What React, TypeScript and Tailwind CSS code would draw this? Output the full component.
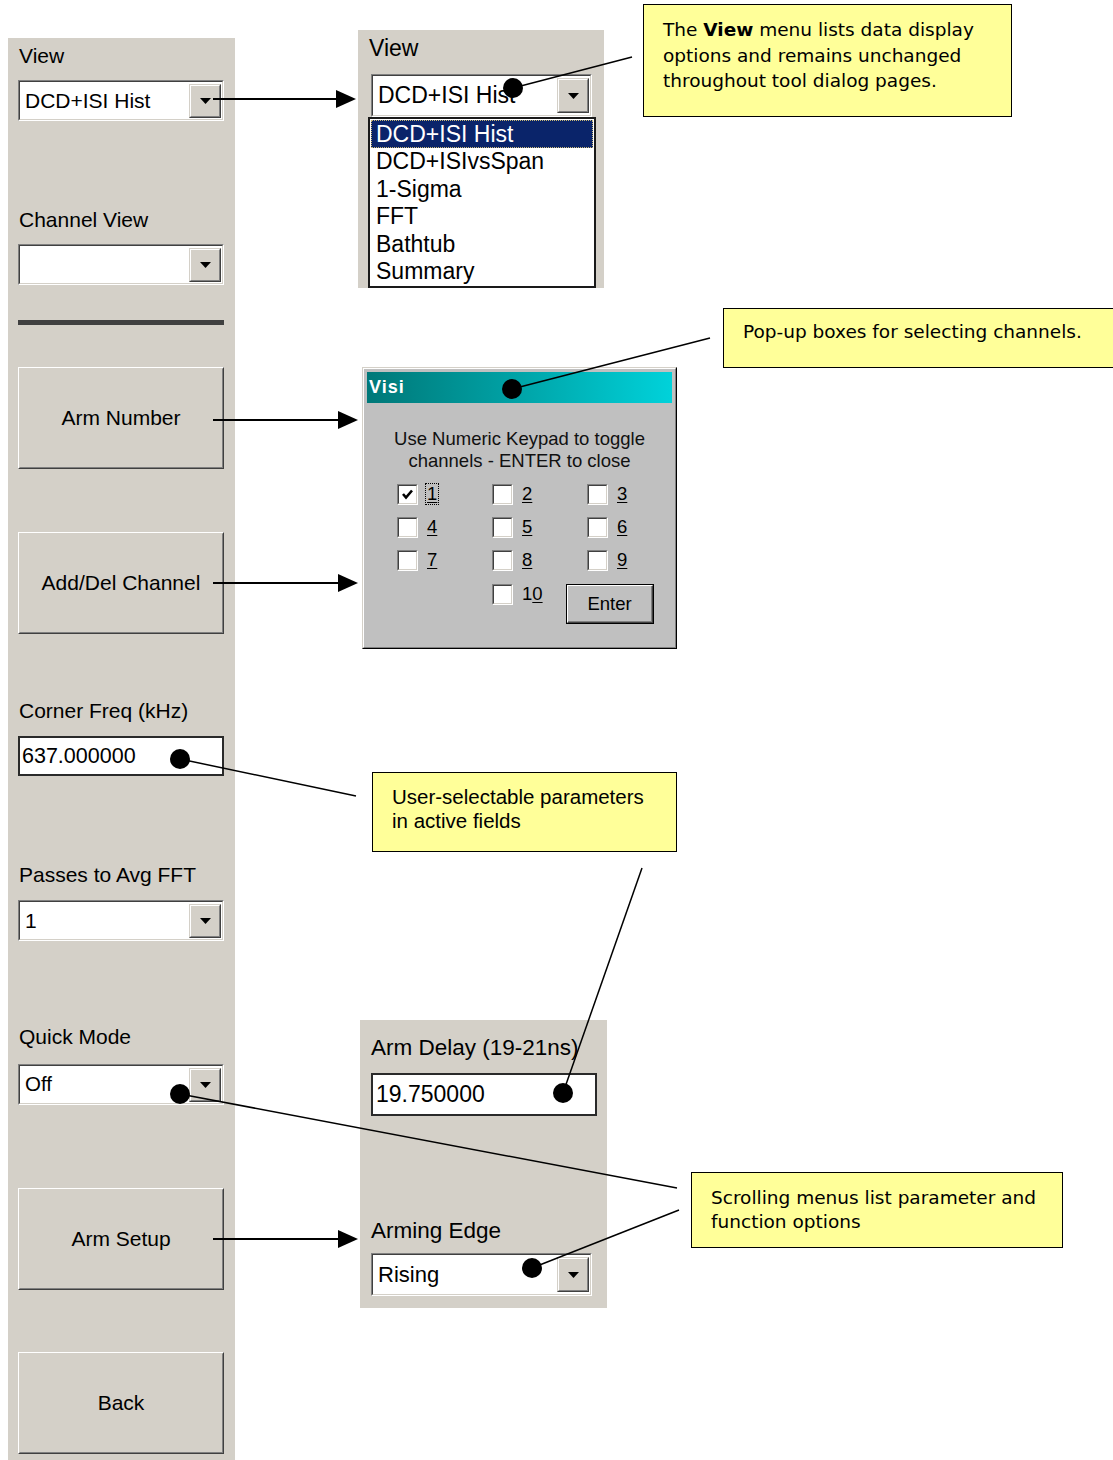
import React from 'react';

const ui = "font-['Liberation_Sans',Arial,sans-serif]";
const tah = "font-['DejaVu_Sans',Verdana,sans-serif]";

function Tri() {
  return (
    <svg width="11" height="6" viewBox="0 0 11 6">
      <polygon points="0,0 11,0 5.5,6" fill="black" />
    </svg>
  );
}

function DropBtn({ className }: { className: string }) {
  return (
    <div className={`border border-t-[#d4d0c8] border-l-[#d4d0c8] border-b-[#404040] border-r-[#404040] bg-[#d4d0c8] ${className}`}>
      <div className="h-full w-full border border-t-white border-l-white border-b-[#808080] border-r-[#808080] flex items-center justify-center">
        <Tri />
      </div>
    </div>
  );
}

function Select({ value, className, textClass, btnClass }: { value: string; className: string; textClass: string; btnClass: string }) {
  return (
    <div className={`border border-t-[#808080] border-l-[#808080] border-b-white border-r-white ${className}`}>
      <div className="h-full border border-t-[#404040] border-l-[#404040] border-b-[#d4d0c8] border-r-[#d4d0c8] bg-white flex items-center justify-between pl-[5px] pr-[1px]">
        <span className={`${textClass} whitespace-nowrap`}>{value}</span>
        <DropBtn className={btnClass} />
      </div>
    </div>
  );
}

function Label({ text, className }: { text: string; className: string }) {
  return <div className={`text-[21px] leading-[24px] text-black whitespace-nowrap ${className}`}>{text}</div>;
}

function BigButton({ label, className }: { label: string; className: string }) {
  return (
    <div className={`h-[102px] border border-t-white border-l-white border-b-[#404040] border-r-[#404040] ${className}`}>
      <div className="h-full border border-t-[#d4d0c8] border-l-[#d4d0c8] border-b-[#808080] border-r-[#808080] flex items-center justify-center text-[21px] text-black">
        {label}
      </div>
    </div>
  );
}

function Check({ checked }: { checked?: boolean }) {
  return (
    <div className="w-[21px] h-[21px] shrink-0 border border-t-[#808080] border-l-[#808080] border-b-white border-r-white">
      <div className="h-full border border-t-[#404040] border-l-[#404040] border-b-[#d4d0c8] border-r-[#d4d0c8] bg-white flex items-center justify-center">
        {checked && (
          <svg width="13" height="13" viewBox="0 0 13 13">
            <path d="M2 6 L5 9.5 L11 2.5" stroke="black" strokeWidth="2.6" fill="none" />
          </svg>
        )}
      </div>
    </div>
  );
}

function Chan({ pre, u, focus }: { pre?: string; u: string; focus?: boolean }) {
  return (
    <div className="flex items-start gap-[7px]">
      <Check checked={focus} />
      <span
        className={`text-[18.5px] leading-[20px] px-[1px] -mt-[1px] border border-dotted ${focus ? 'border-black' : 'border-transparent'}`}
      >
        {pre}
        <span className="underline underline-offset-2">{u}</span>
      </span>
    </div>
  );
}

export default function App() {
  const listItems = ['DCD+ISI Hist', 'DCD+ISIvsSpan', '1-Sigma', 'FFT', 'Bathtub', 'Summary'];

  return (
    <div className={`relative w-[1113px] h-[1460px] bg-white overflow-hidden text-black ${ui}`}>
      <div className="flex h-full">
        {/* left control column */}
        <aside className="ml-[8px] mt-[38px] w-[227px] bg-[#d4d0c8] flex flex-col pl-[10px] pr-[11px]">
          <Label text="View" className="mt-[6px] pl-[1px]" />
          <Select value="DCD+ISI Hist" className="mt-[12px] h-[41px]" textClass="text-[21px]" btnClass="w-[32px] h-[34px]" />
          <Label text="Channel View" className="mt-[87px] pl-[1px]" />
          <Select value="" className="mt-[12px] h-[41px]" textClass="text-[21px]" btnClass="w-[32px] h-[34px]" />
          <div className="mt-[35px] h-[5px] bg-[#404040]" />
          <BigButton label="Arm Number" className="mt-[42px]" />
          <BigButton label="Add/Del Channel" className="mt-[63px]" />
          <Label text="Corner Freq (kHz)" className="mt-[65px] pl-[1px]" />
          <div className="mt-[13px] h-[40px] border-2 border-[#2a2a2a] bg-white flex items-center pl-[2px] text-[21.5px]">
            637.000000
          </div>
          <Label text="Passes to Avg FFT" className="mt-[87px] pl-[1px]" />
          <Select value="1" className="mt-[13px] h-[41px]" textClass="text-[21px]" btnClass="w-[32px] h-[34px]" />
          <Label text="Quick Mode" className="mt-[84px] pl-[1px]" />
          <Select value="Off" className="mt-[15px] h-[41px]" textClass="text-[20.5px]" btnClass="w-[32px] h-[34px]" />
          <BigButton label="Arm Setup" className="mt-[83px]" />
          <BigButton label="Back" className="mt-[62px]" />
        </aside>
      </div>

      {/* View menu opened */}
      <div className="absolute left-[358px] top-[30px] w-[246px] h-[258px] bg-[#d4d0c8] overflow-hidden pt-[5px]">
        <div className="pl-[11px] text-[23px] leading-[26px]">View</div>
        <Select value="DCD+ISI Hist" className="ml-[13px] mt-[13px] w-[221px] h-[43px]" textClass="text-[23px]" btnClass="w-[32px] h-[35px]" />
        <div className="ml-[10px] w-[228px] border-2 border-[#1a1a1a] bg-white p-[1px]">
          {listItems.map((it, i) => (
            <div
              key={it}
              className={`h-[27.5px] flex items-center pl-[4px] text-[23px] leading-[26px] whitespace-nowrap border border-dotted ${
                i === 0 ? 'bg-[#0a246a] text-white border-[#c8b878]' : 'border-transparent'
              }`}
            >
              {it}
            </div>
          ))}
        </div>
      </div>

      {/* callout: view menu */}
      <div className={`absolute left-[643px] top-[4px] w-[369px] h-[113px] bg-[#ffff99] border border-black pl-[19px] pt-[12px] text-[18.5px] leading-[25.5px] whitespace-nowrap ${tah}`}>
        The <b>View</b> menu lists data display
        <br />
        options and remains unchanged
        <br />
        throughout tool dialog pages.
      </div>

      {/* callout: pop-up boxes */}
      <div className={`absolute left-[723px] top-[308px] w-[400px] h-[60px] bg-[#ffff99] border border-black pl-[19px] pt-[10px] text-[18.5px] leading-[25.5px] whitespace-nowrap ${tah}`}>
        Pop-up boxes for selecting channels.
      </div>

      {/* Visi channel dialog */}
      <div className="absolute left-[362px] top-[367px] w-[315px] h-[282px] border border-t-[#d4d0c8] border-l-[#d4d0c8] border-b-black border-r-black">
        <div className="h-full border border-t-white border-l-white border-b-[#808080] border-r-[#808080] bg-[#c0c0c0] p-[3px]">
          <div className="h-[31px] bg-linear-to-r from-[#007878] to-[#00d2da] flex items-center pl-[2px] text-white font-bold text-[18px] tracking-[1px]">
            Visi
          </div>
          <div className="mt-[25px] text-center text-[18.5px] leading-[22px] text-[#111]">
            Use Numeric Keypad to toggle
            <br />
            channels - ENTER to close
          </div>
          <div className="mt-[12px] pl-[30px] flex flex-col">
            <div className="flex h-[33px]">
              <div className="w-[95px] shrink-0"><Chan u="1" focus /></div>
              <div className="w-[95px] shrink-0"><Chan u="2" /></div>
              <div className="w-[95px] shrink-0"><Chan u="3" /></div>
            </div>
            <div className="flex h-[33px]">
              <div className="w-[95px] shrink-0"><Chan u="4" /></div>
              <div className="w-[95px] shrink-0"><Chan u="5" /></div>
              <div className="w-[95px] shrink-0"><Chan u="6" /></div>
            </div>
            <div className="flex h-[34px]">
              <div className="w-[95px] shrink-0"><Chan u="7" /></div>
              <div className="w-[95px] shrink-0"><Chan u="8" /></div>
              <div className="w-[95px] shrink-0"><Chan u="9" /></div>
            </div>
            <div className="flex">
              <div className="w-[95px] shrink-0" />
              <div className="w-[74px] shrink-0"><Chan pre="1" u="0" /></div>
              <div className="w-[88px] h-[40px] shrink-0 border border-black">
                <div className="h-full border border-t-white border-l-white border-b-[#404040] border-r-[#404040]">
                  <div className="h-full border-b border-r border-[#808080] flex items-center justify-center text-[18.5px]">
                    Enter
                  </div>
                </div>
              </div>
            </div>
          </div>
        </div>
      </div>

      {/* callout: active fields */}
      <div className="absolute left-[372px] top-[772px] w-[305px] h-[80px] bg-[#ffff99] border border-black pl-[19px] pt-[12px] text-[20.5px] leading-[24px] whitespace-nowrap">
        User-selectable parameters
        <br />
        in active fields
      </div>

      {/* arm setup page */}
      <div className="absolute left-[360px] top-[1020px] w-[247px] h-[288px] bg-[#d4d0c8] pt-[15px]">
        <div className="pl-[11px] text-[22.5px] leading-[26px] whitespace-nowrap">Arm Delay (19-21ns)</div>
        <div className="ml-[11px] mt-[12px] w-[226px] h-[43px] border-2 border-[#2a2a2a] bg-white flex items-center pl-[3px] text-[23px]">
          19.750000
        </div>
        <div className="mt-[102px] pl-[11px] text-[22.5px] leading-[26px]">Arming Edge</div>
        <Select value="Rising" className="ml-[11px] mt-[9px] w-[221px] h-[43px]" textClass="text-[22px]" btnClass="w-[32px] h-[35px]" />
      </div>

      {/* callout: scrolling menus */}
      <div className={`absolute left-[691px] top-[1172px] w-[372px] h-[76px] bg-[#ffff99] border border-black pl-[19px] pt-[13px] text-[18.5px] leading-[24px] whitespace-nowrap ${tah}`}>
        Scrolling menus list parameter and
        <br />
        function options
      </div>

      {/* leader lines, arrows and dots */}
      <svg className="absolute inset-0 pointer-events-none" width="1113" height="1460" viewBox="0 0 1113 1460">
        <g stroke="black" strokeWidth="1.5">
          <line x1="632" y1="57" x2="513" y2="88" />
          <line x1="710" y1="338" x2="512" y2="389" />
          <line x1="356" y1="796" x2="180" y2="759" />
          <line x1="642" y1="868" x2="563" y2="1093" />
          <line x1="677" y1="1188" x2="180" y2="1094" />
          <line x1="679" y1="1210" x2="532" y2="1268" />
        </g>
        <g stroke="black" strokeWidth="2">
          <line x1="213" y1="99" x2="340" y2="99" />
          <line x1="213" y1="420" x2="340" y2="420" />
          <line x1="213" y1="583" x2="340" y2="583" />
          <line x1="213" y1="1239" x2="340" y2="1239" />
        </g>
        <g fill="black">
          <polygon points="356,99 336,90 336,108" />
          <polygon points="358,420 338,411 338,429" />
          <polygon points="358,583 338,574 338,592" />
          <polygon points="358,1239 338,1230 338,1248" />
          <circle cx="513" cy="88" r="10" />
          <circle cx="512" cy="389" r="10" />
          <circle cx="180" cy="759" r="10" />
          <circle cx="563" cy="1093" r="10" />
          <circle cx="180" cy="1094" r="10" />
          <circle cx="532" cy="1268" r="10" />
        </g>
      </svg>
    </div>
  );
}
